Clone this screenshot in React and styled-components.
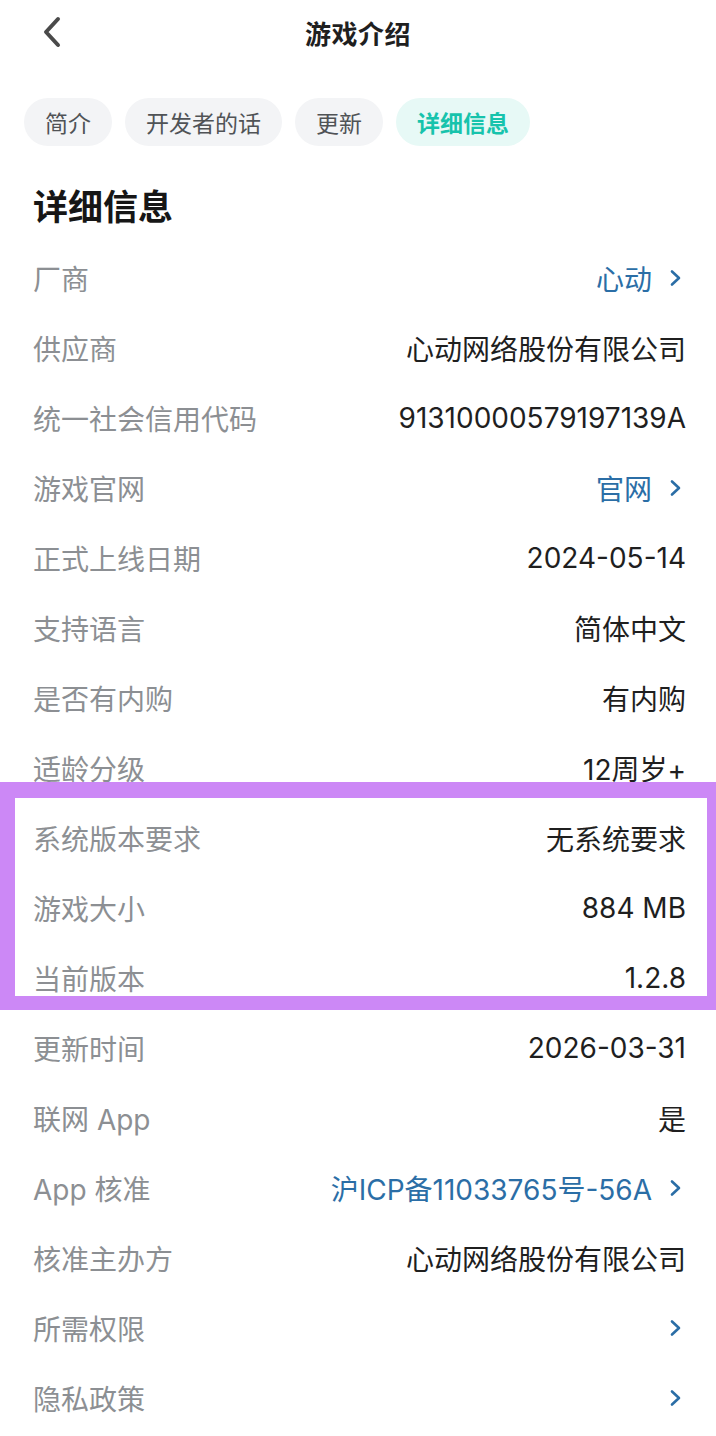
import styled, { createGlobalStyle } from "styled-components";

const GlobalStyle = createGlobalStyle`
  * { box-sizing: border-box; }
  html, body {
    margin: 0;
    padding: 0;
    background: #ffffff;
    overflow-x: hidden;
  }
  body {
    font-family: Inter, "Noto Sans CJK SC", sans-serif;
    -webkit-font-smoothing: antialiased;
  }
`;

const Page = styled.div`
  position: relative;
  width: 716px;
  min-height: 1436px;
  background: #ffffff;
`;

const TopBar = styled.header`
  position: relative;
  height: 64px;
  display: flex;
  align-items: center;
  justify-content: center;
`;

const BackButton = styled.button`
  position: absolute;
  left: 36px;
  top: 14px;
  width: 32px;
  height: 36px;
  padding: 0;
  border: 0;
  background: none;
  display: flex;
  align-items: center;
  justify-content: center;
  color: #4a4a4a;
`;

const Title = styled.h1`
  margin: 0;
  font-family: "Noto Sans CJK SC", sans-serif;
  font-size: 26px;
  font-weight: 600;
  color: #1f1f1f;
  letter-spacing: 0.5px;
`;

const Tabs = styled.nav`
  display: flex;
  gap: 13px;
  padding: 34px 24px 0;
`;

const Tab = styled.div`
  height: 48px;
  padding: 0 21px;
  border-radius: 24px;
  display: flex;
  align-items: center;
  font-family: "Noto Sans CJK SC", sans-serif;
  font-size: 23px;
  font-weight: ${(p) => (p.$active ? 600 : 400)};
  color: ${(p) => (p.$active ? "#17c3ac" : "#505356")};
  background: ${(p) => (p.$active ? "#e7f9f6" : "#f3f4f6")};
`;

const SectionTitle = styled.h2`
  margin: 34px 0 0;
  padding: 0 33px;
  height: 50px;
  line-height: 50px;
  font-family: "Noto Sans CJK SC", sans-serif;
  font-size: 35px;
  font-weight: 700;
  color: #161616;
`;

const List = styled.div`
  display: flex;
  flex-direction: column;
  padding: 13px 30px 0 33px;
`;

const Row = styled.div`
  height: 70px;
  display: flex;
  align-items: center;
  justify-content: space-between;
  font-size: 28px;
`;

const Label = styled.span`
  color: #8c8f93;
  font-weight: 400;
`;

const Value = styled.span`
  display: flex;
  align-items: center;
  gap: 14px;
  color: ${(p) => (p.$link ? "#2b6ea6" : "#1f1f1f")};
  font-weight: 400;
`;

const Chevron = styled.svg`
  width: 20px;
  height: 22px;
  color: #2b6ea6;
  flex: none;
`;

const Highlight = styled.div`
  position: absolute;
  left: 0;
  top: 782px;
  width: 716px;
  height: 228px;
  border-style: solid;
  border-color: #cc88f6;
  border-width: 16px 9px 14px 15px;
  pointer-events: none;
`;

const tabs = ["简介", "开发者的话", "更新", "详细信息"];

const rows = [
  { label: "厂商", value: "心动", link: true },
  { label: "供应商", value: "心动网络股份有限公司" },
  { label: "统一社会信用代码", value: "91310000579197139A" },
  { label: "游戏官网", value: "官网", link: true },
  { label: "正式上线日期", value: "2024-05-14" },
  { label: "支持语言", value: "简体中文" },
  { label: "是否有内购", value: "有内购" },
  { label: "适龄分级", value: "12周岁+" },
  { label: "系统版本要求", value: "无系统要求" },
  { label: "游戏大小", value: "884 MB" },
  { label: "当前版本", value: "1.2.8" },
  { label: "更新时间", value: "2026-03-31" },
  { label: "联网 App", value: "是" },
  { label: "App 核准", value: "沪ICP备11033765号-56A", link: true },
  { label: "核准主办方", value: "心动网络股份有限公司" },
  { label: "所需权限", value: "", link: true },
  { label: "隐私政策", value: "", link: true },
];

function ChevronRight() {
  return (
    <Chevron viewBox="0 0 20 22" fill="none">
      <path
        d="M6 4.5 L13 11 L6 17.5"
        stroke="currentColor"
        strokeWidth="2.6"
        strokeLinecap="round"
        strokeLinejoin="round"
      />
    </Chevron>
  );
}

export default function App() {
  return (
    <>
      <GlobalStyle />
      <Page>
        <TopBar>
          <BackButton aria-label="返回">
            <svg width="28" height="34" viewBox="0 0 28 34" fill="none">
              <path
                d="M20 4 L8 17 L20 30"
                stroke="currentColor"
                strokeWidth="4"
                strokeLinecap="round"
                strokeLinejoin="round"
              />
            </svg>
          </BackButton>
          <Title>游戏介绍</Title>
        </TopBar>

        <Tabs>
          {tabs.map((t) => (
            <Tab key={t} $active={t === "详细信息"}>
              {t}
            </Tab>
          ))}
        </Tabs>

        <SectionTitle>详细信息</SectionTitle>

        <List>
          {rows.map((r) => (
            <Row key={r.label}>
              <Label>{r.label}</Label>
              <Value $link={r.link}>
                {r.value && <span>{r.value}</span>}
                {r.link && <ChevronRight />}
              </Value>
            </Row>
          ))}
        </List>

        <Highlight />
      </Page>
    </>
  );
}
